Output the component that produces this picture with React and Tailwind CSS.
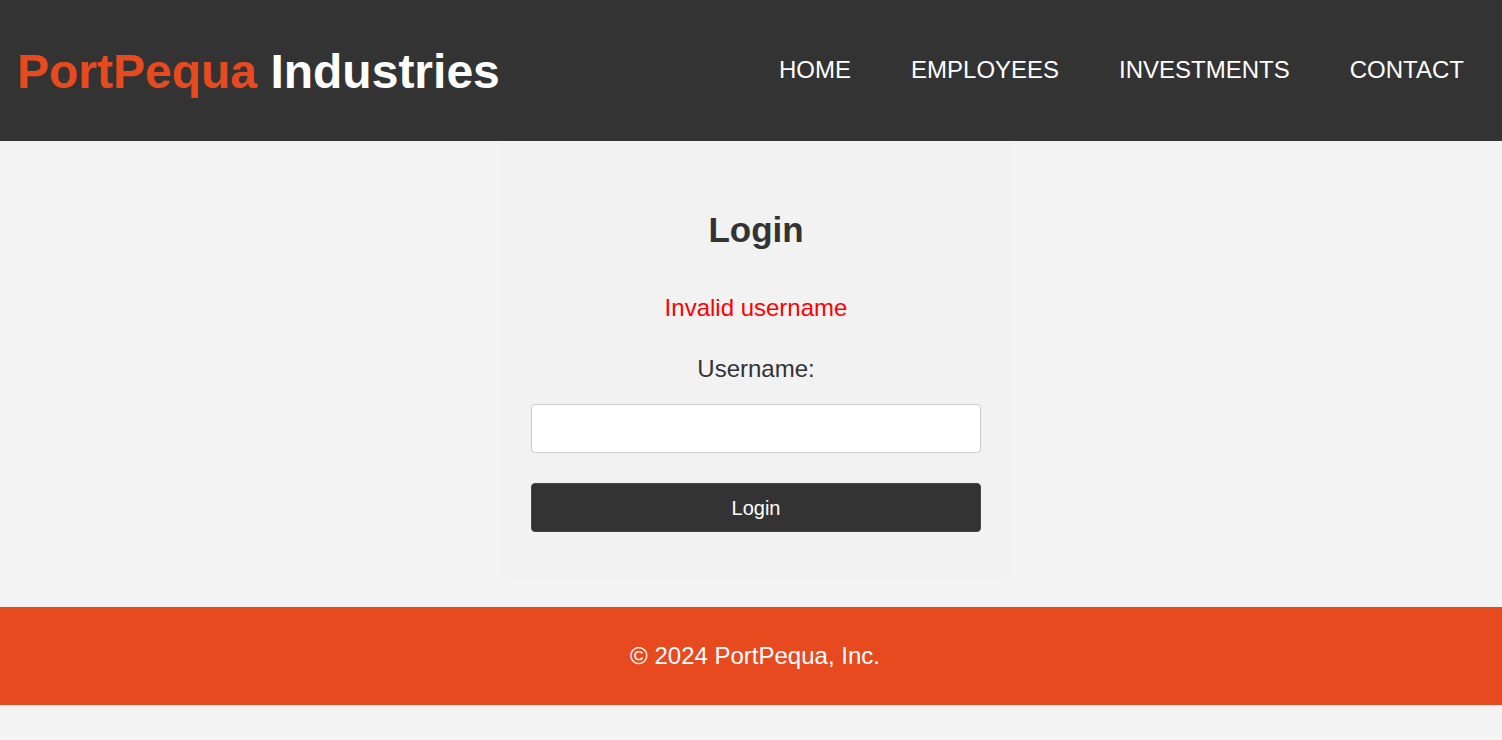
export default function App() {
  const font = { fontFamily: '"Liberation Sans", Arial, sans-serif' };
  return (
    <div className="min-h-[740px] bg-[#f4f4f4]" style={font}>
      <header className="h-[141px] bg-[#333333] flex items-center justify-between pl-[17px] pr-[38px]">
        <h1 className="text-[48px] font-bold leading-normal mt-[2px]">
          <span className="text-[#e84a1f]">PortPequa</span>{" "}
          <span className="text-white">Industries</span>
        </h1>
        <nav className="flex gap-[60px] text-[24px] text-white leading-normal mb-[2px]">
          <a>HOME</a>
          <a>EMPLOYEES</a>
          <a>INVESTMENTS</a>
          <a>CONTACT</a>
        </nav>
      </header>
      <main className="flex justify-center pl-[10px]">
        <div className="w-[508px] bg-[#f2f2f2] rounded-b-[8px] px-[29px] pt-[69px] pb-[45px] flex flex-col items-center">
          <h2 className="text-[35px] font-bold text-[#333333] leading-[40px]">Login</h2>
          <p className="mt-[44px] text-[24px] text-[#ff0000] leading-[28px]">Invalid username</p>
          <label className="mt-[33px] text-[24px] text-[#333333] leading-[28px]">Username:</label>
          <input
            type="text"
            className="mt-[21px] w-[450px] h-[49px] bg-white border border-[#cccccc] rounded-[4px] px-3 outline-none"
          />
          <button className="mt-[30px] w-[450px] h-[49px] bg-[#333333] border border-[#444444] text-white text-[20px] rounded-[4px]">
            Login
          </button>
        </div>
      </main>
      <footer className="mt-[30px] h-[98px] bg-[#e84a1f] flex items-center justify-center pl-[8px] text-white text-[24px]">
        © 2024 PortPequa, Inc.
      </footer>
    </div>
  );
}
